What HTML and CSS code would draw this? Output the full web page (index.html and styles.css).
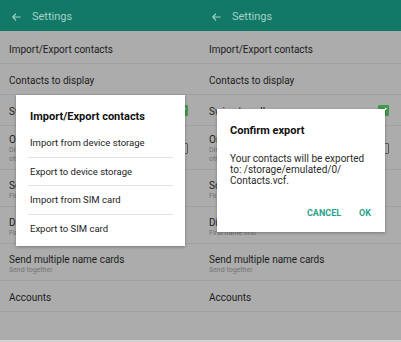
FILE: index.html
```html
<!DOCTYPE html>
<html lang="en">
<head>
    <meta charset="UTF-8">
    <meta name="viewport" content="width=device-width, initial-scale=1.0">
    <title>Contacts settings</title>
    <link rel="stylesheet" href="styles.css">
</head>
<body>
    <div class="screens">
        <!-- left screen: import/export picker -->
        <section class="phone">
            <header class="appbar">
                <svg class="back" width="9" height="8" viewBox="0 0 9 8"><path d="M4 0.7 L0.8 4 L4 7.3 M0.8 4 H8.6" fill="none" stroke="currentColor" stroke-width="1.2"/></svg>
                <span class="appbar-title">Settings</span>
            </header>
            <div class="list">
                <div class="row first"><span class="label">Import/Export contacts</span></div>
                <div class="row"><span class="label">Contacts to display</span></div>
                <div class="row check-row">
                    <span class="label">Swipe to call or message</span>
                    <span class="checkbox checked"><svg width="10" height="10" viewBox="0 0 10 10"><path d="M2 5.2 L4.2 7.3 L8.2 2.8" fill="none" stroke="#fff" stroke-width="1.4"/></svg></span>
                </div>
                <div class="row tallest check-row">
                    <div class="text">
                        <span class="label">Only contacts with phones</span>
                        <span class="sub">Display only contacts that have phone numbers,<br>other contacts will be hidden</span>
                    </div>
                    <span class="checkbox"></span>
                </div>
                <div class="row tall">
                    <span class="label">Sort by</span>
                    <span class="sub">First name</span>
                </div>
                <div class="row tall">
                    <span class="label">Display contacts by</span>
                    <span class="sub">First name first</span>
                </div>
                <div class="row tall">
                    <span class="label">Send multiple name cards</span>
                    <span class="sub">Send together</span>
                </div>
                <div class="row"><span class="label">Accounts</span></div>
            </div>
            <div class="navstrip"></div>

            <div class="dialog dialog-list">
                <h2 class="dialog-title">Import/Export contacts</h2>
                <div class="option">Import from device storage</div>
                <div class="option">Export to device storage</div>
                <div class="option">Import from SIM card</div>
                <div class="option">Export to SIM card</div>
            </div>
        </section>

        <!-- right screen: confirm export -->
        <section class="phone">
            <header class="appbar">
                <svg class="back" width="9" height="8" viewBox="0 0 9 8"><path d="M4 0.7 L0.8 4 L4 7.3 M0.8 4 H8.6" fill="none" stroke="currentColor" stroke-width="1.2"/></svg>
                <span class="appbar-title">Settings</span>
            </header>
            <div class="list">
                <div class="row first"><span class="label">Import/Export contacts</span></div>
                <div class="row"><span class="label">Contacts to display</span></div>
                <div class="row check-row">
                    <span class="label">Swipe to call or message</span>
                    <span class="checkbox checked"><svg width="10" height="10" viewBox="0 0 10 10"><path d="M2 5.2 L4.2 7.3 L8.2 2.8" fill="none" stroke="#fff" stroke-width="1.4"/></svg></span>
                </div>
                <div class="row tallest check-row">
                    <div class="text">
                        <span class="label">Only contacts with phones</span>
                        <span class="sub">Display only contacts that have phone numbers,<br>other contacts will be hidden</span>
                    </div>
                    <span class="checkbox"></span>
                </div>
                <div class="row tall">
                    <span class="label">Sort by</span>
                    <span class="sub">First name</span>
                </div>
                <div class="row tall">
                    <span class="label">Display contacts by</span>
                    <span class="sub">First name first</span>
                </div>
                <div class="row tall">
                    <span class="label">Send multiple name cards</span>
                    <span class="sub">Send together</span>
                </div>
                <div class="row"><span class="label">Accounts</span></div>
            </div>
            <div class="navstrip"></div>

            <div class="dialog dialog-confirm">
                <h2 class="dialog-title">Confirm export</h2>
                <p class="dialog-body">Your contacts will be exported<br>to: /storage/emulated/0/<br>Contacts.vcf.</p>
                <div class="actions">
                    <button class="action">CANCEL</button>
                    <button class="action">OK</button>
                </div>
            </div>
        </section>
    </div>
</body>
</html>
```

FILE: styles.css
```css
:root {
    --appbar: #127868;
    --appbar-text: #a4d2c6;
    --background: #acacac;
    --divider: #a0a0a0;
    --text: #1c1c1c;
    --subtext: #737373;
    --accent: #2aa38c;
}

body {
    font-family: Roboto, "Liberation Sans", Arial, sans-serif;
    margin: 0;
    width: 401px;
    height: 342px;
    overflow: hidden;
    background: var(--background);
}

.screens {
    display: flex;
    height: 342px;
}

.phone {
    position: relative;
    width: 200px;
    height: 342px;
    display: flex;
    flex-direction: column;
    background: var(--background);
}

.phone + .phone {
    width: 201px;
}

.appbar {
    height: 31px;
    background: var(--appbar);
    color: var(--appbar-text);
    display: flex;
    align-items: center;
    padding: 2px 0 0 12px;
    box-sizing: border-box;
    gap: 11px;
}

.appbar-title {
    font-size: 11px;
}

.list {
    flex: 1;
}

.row {
    box-sizing: border-box;
    height: 31px;
    padding: 4px 12px 0 9px;
    border-bottom: 1px solid var(--divider);
    display: flex;
    flex-direction: column;
    justify-content: center;
    color: var(--text);
}

.row.first {
    height: 33px;
    padding-top: 5px;
}

.row.tall {
    height: 37px;
}

.row.tallest {
    height: 44px;
    padding-top: 2px;
}

.check-row {
    flex-direction: row;
    align-items: center;
    justify-content: space-between;
}

.check-row .checkbox {
    margin-top: -4px;
}

.row.tallest .checkbox {
    margin-top: 0;
}

.text {
    display: flex;
    flex-direction: column;
}

.label {
    font-size: 10px;
    line-height: 12px;
    white-space: nowrap;
}

.sub {
    font-size: 7px;
    line-height: 9px;
    color: var(--subtext);
    white-space: nowrap;
}

.checkbox {
    width: 9px;
    height: 9px;
    border: 1px solid #5a5a5a;
    border-radius: 1px;
    display: flex;
    align-items: center;
    justify-content: center;
    flex-shrink: 0;
}

.checkbox.checked {
    background: #3f9a4b;
    border-color: #3f9a4b;
}

.navstrip {
    height: 2px;
    background: #d4d4d4;
}

.dialog {
    position: absolute;
    background: #fff;
    box-shadow: 0 1px 3px rgba(0,0,0,0.3);
    box-sizing: border-box;
}

.dialog-title {
    margin: 0;
    font-size: 11px;
    line-height: 14px;
    font-weight: bold;
    color: #111;
}

.dialog-list {
    left: 16px;
    top: 95px;
    width: 169px;
    height: 151px;
    padding: 15px 12px 3px;
}

.dialog-list .dialog-title {
    padding-left: 2px;
    margin-bottom: 5px;
}

.option {
    height: 28.5px;
    box-sizing: border-box;
    display: flex;
    align-items: center;
    padding-left: 2px;
    font-size: 9.5px;
    color: #222;
    border-bottom: 1px solid #e2e2e2;
}

.option:last-child {
    border-bottom: none;
}

.dialog-confirm {
    left: 17px;
    top: 109px;
    width: 168px;
    height: 123px;
    padding: 15px 14px 13px 13px;
}

.dialog-body {
    margin: 15px 0 0;
    font-size: 10px;
    line-height: 11px;
    color: #2a2a2a;
}

.actions {
    display: flex;
    justify-content: flex-end;
    gap: 18px;
    margin-top: 21px;
}

.action {
    background: none;
    border: none;
    padding: 0;
    font-family: inherit;
    font-size: 9px;
    line-height: 12px;
    font-weight: bold;
    color: var(--accent);
}
```
